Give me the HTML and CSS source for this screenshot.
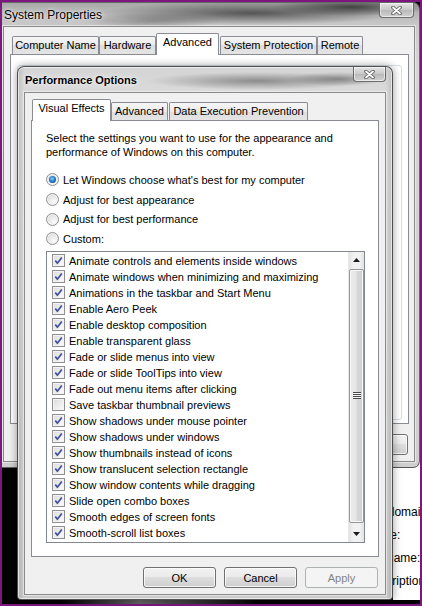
FILE: index.html
```html
<!DOCTYPE html>
<html>
<head>
<meta charset="utf-8">
<title>Performance Options</title>
<link rel="stylesheet" href="styles.css">
</head>
<body>
<div class="desktop">
  <div class="backwin">
    <div class="bw-text">
      <div class="bw-head">Computer name, domain, and workgroup settings</div>
      <div class="bw-row">Computer name:</div>
      <div class="bw-row">Full computer name:</div>
      <div class="bw-row">Computer description:</div>
      <div class="bw-row">Workgroup:</div>
    </div>
  </div>
  <div class="bottomglow"></div>

  <div class="win sysprop">
    <div class="titlebar"><span class="title">System Properties</span></div>
    <div class="closebtn sp-close">
      <svg width="11" height="9" viewBox="0 0 11 9"><path class="x-out" d="M2 1.5 L9 7.5 M9 1.5 L2 7.5"/><path class="x-in" d="M2 1.5 L9 7.5 M9 1.5 L2 7.5"/></svg>
    </div>
    <div class="client sp-client">
      <div class="tabs sp-tabs">
        <div class="tab w87">Computer Name</div>
        <div class="tab w57">Hardware</div>
        <div class="tab sel w63">Advanced</div>
        <div class="tab w97 ml1">System Protection</div>
        <div class="tab w46">Remote</div>
      </div>
      <div class="panel sp-panel">
        <div class="groupbox"></div>
      </div>
      <div class="btnrow sp-btns">
        <span class="btn"></span>
        <span class="btn"></span>
        <span class="btn"></span>
      </div>
    </div>
  </div>

  <div class="win perf">
    <div class="titlebar pf-titlebar"><span class="title">Performance Options</span></div>
    <div class="closebtn pf-close">
      <svg width="11" height="9" viewBox="0 0 11 9"><path class="x-out" d="M2 1.5 L9 7.5 M9 1.5 L2 7.5"/><path class="x-in" d="M2 1.5 L9 7.5 M9 1.5 L2 7.5"/></svg>
    </div>
    <div class="client pf-client">
      <div class="tabs pf-tabs">
        <div class="tab sel w79">Visual Effects</div>
        <div class="tab w57">Advanced</div>
        <div class="tab w139 ml1">Data Execution Prevention</div>
      </div>
      <div class="panel pf-panel">
        <p class="intro">Select the settings you want to use for the appearance and performance of Windows on this computer.</p>
        <div class="radios">
          <div class="radio"><span class="rb on"></span><span>Let Windows choose what's best for my computer</span></div>
          <div class="radio"><span class="rb"></span><span>Adjust for best appearance</span></div>
          <div class="radio"><span class="rb"></span><span>Adjust for best performance</span></div>
          <div class="radio"><span class="rb"></span><span>Custom:</span></div>
        </div>
        <div class="listbox">
          <div class="items">
            <div class="item"><span class="cb on"><svg viewBox="0 0 11 11"><path d="M2.3 5.6 L4.4 8.2 L8.8 2.4"/></svg></span><span>Animate controls and elements inside windows</span></div>
            <div class="item"><span class="cb on"><svg viewBox="0 0 11 11"><path d="M2.3 5.6 L4.4 8.2 L8.8 2.4"/></svg></span><span>Animate windows when minimizing and maximizing</span></div>
            <div class="item"><span class="cb on"><svg viewBox="0 0 11 11"><path d="M2.3 5.6 L4.4 8.2 L8.8 2.4"/></svg></span><span>Animations in the taskbar and Start Menu</span></div>
            <div class="item"><span class="cb on"><svg viewBox="0 0 11 11"><path d="M2.3 5.6 L4.4 8.2 L8.8 2.4"/></svg></span><span>Enable Aero Peek</span></div>
            <div class="item"><span class="cb on"><svg viewBox="0 0 11 11"><path d="M2.3 5.6 L4.4 8.2 L8.8 2.4"/></svg></span><span>Enable desktop composition</span></div>
            <div class="item"><span class="cb on"><svg viewBox="0 0 11 11"><path d="M2.3 5.6 L4.4 8.2 L8.8 2.4"/></svg></span><span>Enable transparent glass</span></div>
            <div class="item"><span class="cb on"><svg viewBox="0 0 11 11"><path d="M2.3 5.6 L4.4 8.2 L8.8 2.4"/></svg></span><span>Fade or slide menus into view</span></div>
            <div class="item"><span class="cb on"><svg viewBox="0 0 11 11"><path d="M2.3 5.6 L4.4 8.2 L8.8 2.4"/></svg></span><span>Fade or slide ToolTips into view</span></div>
            <div class="item"><span class="cb on"><svg viewBox="0 0 11 11"><path d="M2.3 5.6 L4.4 8.2 L8.8 2.4"/></svg></span><span>Fade out menu items after clicking</span></div>
            <div class="item"><span class="cb"></span><span>Save taskbar thumbnail previews</span></div>
            <div class="item"><span class="cb on"><svg viewBox="0 0 11 11"><path d="M2.3 5.6 L4.4 8.2 L8.8 2.4"/></svg></span><span>Show shadows under mouse pointer</span></div>
            <div class="item"><span class="cb on"><svg viewBox="0 0 11 11"><path d="M2.3 5.6 L4.4 8.2 L8.8 2.4"/></svg></span><span>Show shadows under windows</span></div>
            <div class="item"><span class="cb on"><svg viewBox="0 0 11 11"><path d="M2.3 5.6 L4.4 8.2 L8.8 2.4"/></svg></span><span>Show thumbnails instead of icons</span></div>
            <div class="item"><span class="cb on"><svg viewBox="0 0 11 11"><path d="M2.3 5.6 L4.4 8.2 L8.8 2.4"/></svg></span><span>Show translucent selection rectangle</span></div>
            <div class="item"><span class="cb on"><svg viewBox="0 0 11 11"><path d="M2.3 5.6 L4.4 8.2 L8.8 2.4"/></svg></span><span>Show window contents while dragging</span></div>
            <div class="item"><span class="cb on"><svg viewBox="0 0 11 11"><path d="M2.3 5.6 L4.4 8.2 L8.8 2.4"/></svg></span><span>Slide open combo boxes</span></div>
            <div class="item"><span class="cb on"><svg viewBox="0 0 11 11"><path d="M2.3 5.6 L4.4 8.2 L8.8 2.4"/></svg></span><span>Smooth edges of screen fonts</span></div>
            <div class="item"><span class="cb on"><svg viewBox="0 0 11 11"><path d="M2.3 5.6 L4.4 8.2 L8.8 2.4"/></svg></span><span>Smooth-scroll list boxes</span></div>
          </div>
          <div class="scrollbar">
            <div class="sb-arrow"><svg width="7" height="4" viewBox="0 0 7 4"><path d="M0 4 L3.5 0 L7 4 Z"/></svg></div>
            <div class="sb-track">
              <div class="sb-thumb"><span class="grip"></span></div>
            </div>
            <div class="sb-arrow"><svg width="7" height="4" viewBox="0 0 7 4"><path d="M0 0 L7 0 L3.5 4 Z"/></svg></div>
          </div>
        </div>
      </div>
      <div class="btnrow pf-btns">
        <span class="btn">OK</span>
        <span class="btn">Cancel</span>
        <span class="btn disabled">Apply</span>
      </div>
    </div>
  </div>

  <div class="edge"></div>
</div>
</body>
</html>
```

FILE: styles.css
```css
* { box-sizing: border-box; }
html, body { margin: 0; padding: 0; background: #000; }
body {
  width: 422px;
  height: 606px;
  overflow: hidden;
  font-family: "Liberation Sans", Arial, sans-serif;
  font-size: 11px;
  color: #000;
}
.desktop {
  position: relative;
  width: 422px;
  height: 606px;
  background: #000;
  overflow: hidden;
}
.edge {
  position: absolute;
  inset: 0;
  border: 2px solid #7c177f;
  pointer-events: none;
}

/* window behind, bottom right (only a sliver shows beside the dialog) */
.backwin {
  position: absolute;
  left: 393px;
  top: 440px;
  width: 29px;
  height: 160px;
  background: #fff;
  overflow: hidden;
}
.bw-text {
  margin-left: -98px;
  padding-top: 65px;
}
.bw-head, .bw-row {
  height: 23px;
  line-height: 14px;
  white-space: nowrap;
  font-size: 12px;
}
.bw-row { padding-left: 16px; }

.bottomglow {
  position: absolute;
  left: 60px;
  top: 597px;
  width: 200px;
  height: 7px;
  background: linear-gradient(90deg, rgba(140,140,140,0), rgba(170,170,170,.6) 40%, rgba(120,120,120,.3) 80%, rgba(0,0,0,0));
}

/* generic aero window */
.win {
  position: absolute;
  display: flex;
  flex-direction: column;
}
.titlebar {
  flex: none;
  display: flex;
  align-items: center;
  padding-left: 2px;
}
.title {
  font-size: 12px;
  color: #000;
  text-shadow: 0 0 6px rgba(255,255,255,.9), 0 0 2px rgba(255,255,255,.9);
  white-space: nowrap;
}
.closebtn {
  position: absolute;
  top: 0;
  height: 15px;
  display: flex;
  align-items: center;
  justify-content: center;
  border: 1px solid rgba(70,70,70,.75);
  border-top: none;
  border-radius: 0 0 4px 4px;
  background: linear-gradient(#e4e4e4, #c9c9c9 50%, #b9b9b9 51%, #d2d2d2);
  box-shadow: inset 0 0 0 1px rgba(255,255,255,.55);
}
.x-out { stroke: #5c5c5c; stroke-width: 3.6; fill: none; stroke-linecap: round; }
.x-in { stroke: #fff; stroke-width: 1.8; fill: none; stroke-linecap: round; }

.sysprop {
  left: 2px;
  top: 2px;
  width: 418px;
  height: 466px;
  z-index: 1;
  border-radius: 0 7px 7px 0;
  border: 1px solid rgba(60,60,60,.7);
  border-left: none;
  background:
    radial-gradient(ellipse 150px 12px at 250px 10px, rgba(60,60,60,.8), rgba(60,60,60,0)),
    radial-gradient(ellipse 80px 9px at 350px 4px, rgba(40,40,40,.8), rgba(40,40,40,0)),
    radial-gradient(ellipse 70px 8px at 150px 18px, rgba(100,100,100,.55), rgba(100,100,100,0)),
    linear-gradient(#a9a9a9, #cbcbcb 24px, #d6d6d6 60px, #cfcfcf);
}
.sysprop .titlebar { height: 23px; padding-left: 2px; }
.sp-close { right: 5px; width: 35px; }

.client {
  flex: 1;
  display: flex;
  flex-direction: column;
  background: #f0f0f0;
  border: 1px solid #8a8a8a;
  box-shadow: 0 0 0 1px rgba(255,255,255,.45);
}
.sp-client {
  margin: 0 4px 5px 1px;
  padding: 6px 5px 0 6px;
}

/* tabs */
.tabs {
  flex: none;
  display: flex;
  align-items: flex-end;
  height: 21px;
  padding-left: 2px;
  position: relative;
  z-index: 2;
}
.tab {
  height: 18px;
  border: 1px solid #898c95;
  border-bottom: none;
  border-radius: 2px 2px 0 0;
  background: linear-gradient(#f6f6f6, #ebebeb 50%, #dedede 50%, #e4e4e4);
  text-align: center;
  line-height: 16px;
  white-space: nowrap;
}
.tab.sel {
  height: 22px;
  margin-bottom: -1px;
  background: #fff;
  line-height: 17px;
  padding-bottom: 4px;
}
.ml1 { margin-left: 1px; }
.w87 { width: 87px; }
.w57 { width: 57px; }
.w63 { width: 63px; }
.w97 { width: 97px; }
.w46 { width: 46px; }
.w79 { width: 79px; }
.w139 { width: 139px; }

.panel {
  background: #fff;
  border: 1px solid #898c95;
}
.sp-panel {
  height: 370px;
  flex: none;
  padding: 10px 6px 0 6px;
}
.groupbox {
  height: 355px;
  border: 1px solid #d5dfe5;
  border-radius: 3px;
}
.btnrow {
  display: flex;
  justify-content: flex-end;
  gap: 8px;
}
.sp-btns { margin-top: 10px; padding-right: 1px; }

.btn {
  width: 73px;
  height: 21px;
  display: flex;
  align-items: center;
  justify-content: center;
  border: 1px solid #707070;
  border-radius: 3px;
  background: linear-gradient(#f2f2f2, #ebebeb 45%, #dddddd 50%, #cfcfcf);
  box-shadow: inset 0 0 0 1px rgba(255,255,255,.75);
}
.btn.disabled {
  border-color: #adb2b5;
  background: #f4f4f4;
  color: #838383;
  box-shadow: none;
}

/* Performance Options */
.perf {
  left: 17px;
  top: 66px;
  width: 376px;
  height: 534px;
  z-index: 2;
  border-radius: 7px 7px 4px 4px;
  border: 1px solid rgba(50,50,50,.8);
  box-shadow: inset 0 0 0 1px rgba(255,255,255,.6), 0 0 8px rgba(0,0,0,.4);
  background:
    radial-gradient(ellipse 110px 9px at 240px 14px, rgba(90,90,90,.6), rgba(90,90,90,0)),
    radial-gradient(ellipse 50px 7px at 320px 12px, rgba(70,70,70,.5), rgba(70,70,70,0)),
    linear-gradient(90deg, rgba(0,0,0,.12), rgba(0,0,0,0) 6px, rgba(0,0,0,0) 368px, rgba(0,0,0,.12)),
    linear-gradient(#d4d4d4, #dadada 26px, #d2d2d2 300px, #cacaca);
}
.pf-titlebar { height: 25px; padding-left: 7px; }
.pf-titlebar .title { font-weight: bold; font-size: 11px; }
.pf-close { right: 6px; width: 33px; }
.pf-client {
  margin: 0 6px 4px 6px;
  padding: 6px 6px 0 6px;
}
.pf-tabs { padding-left: 1px; }
.pf-panel {
  height: 437px;
  flex: none;
  padding: 10px 13px 0 14px;
  display: flex;
  flex-direction: column;
}
.intro {
  margin: 0;
  line-height: 14px;
  width: 300px;
}
.radios {
  margin-top: 11px;
  display: flex;
  flex-direction: column;
}
.radio {
  height: 19.7px;
  display: flex;
  align-items: center;
  gap: 4px;
  white-space: nowrap;
}
.rb {
  width: 13px;
  height: 13px;
  border-radius: 50%;
  border: 1px solid #8e8f8f;
  background: radial-gradient(circle at 65% 70%, #fbfbfb, #e3e3e3 60%, #cfcfcf);
  box-shadow: inset 0 0 0 1px #f4f4f4;
  position: relative;
  flex: none;
}
.rb.on::after {
  content: "";
  position: absolute;
  left: 2px;
  top: 2px;
  width: 7px;
  height: 7px;
  border-radius: 50%;
  background: radial-gradient(circle at 45% 40%, #8ad1f8, #1a6fc0 55%, #0d3f8a);
}

.listbox {
  margin-top: 2px;
  width: 319px;
  height: 292px;
  border: 1px solid #828790;
  display: flex;
  background: #fff;
}
.items {
  flex: 1;
  padding: 1px 0 0 5px;
}
.item {
  height: 16px;
  display: flex;
  align-items: center;
  gap: 4px;
  white-space: nowrap;
}
.cb {
  width: 13px;
  height: 13px;
  flex: none;
  border: 1px solid #8e8f8f;
  background: linear-gradient(135deg, #dadada, #f2f2f2 70%, #fafafa);
  box-shadow: inset 0 0 0 1px #f4f4f4;
  display: flex;
  align-items: center;
  justify-content: center;
}
.cb svg { width: 11px; height: 11px; }
.cb path { fill: none; stroke: #3f4fa0; stroke-width: 1.7; stroke-linejoin: miter; }

.scrollbar {
  width: 16px;
  flex: none;
  display: flex;
  flex-direction: column;
  background: linear-gradient(90deg, #e3e3e3, #f2f2f2 30%, #f2f2f2 70%, #e3e3e3);
  border-left: 1px solid #e8e8e8;
}
.sb-arrow {
  height: 16px;
  flex: none;
  display: flex;
  align-items: center;
  justify-content: center;
}
.sb-arrow path { fill: #1b1b1b; }
.sb-track {
  flex: 1;
  display: flex;
  padding: 1px 0 3px;
}
.sb-thumb {
  flex: 1;
  border: 1px solid #959595;
  border-radius: 2px;
  background: linear-gradient(90deg, #ececec, #e6e6e6 45%, #d8d8d8 55%, #d0d0d0);
  box-shadow: inset 0 0 0 1px #fafafa;
  display: flex;
  align-items: center;
  justify-content: center;
}
.grip {
  width: 8px;
  height: 7px;
  background: repeating-linear-gradient(#4a4a4a 0 1px, #f4f4f4 1px 2px);
}

.pf-btns { margin-top: 10px; padding-right: 1px; }
```
